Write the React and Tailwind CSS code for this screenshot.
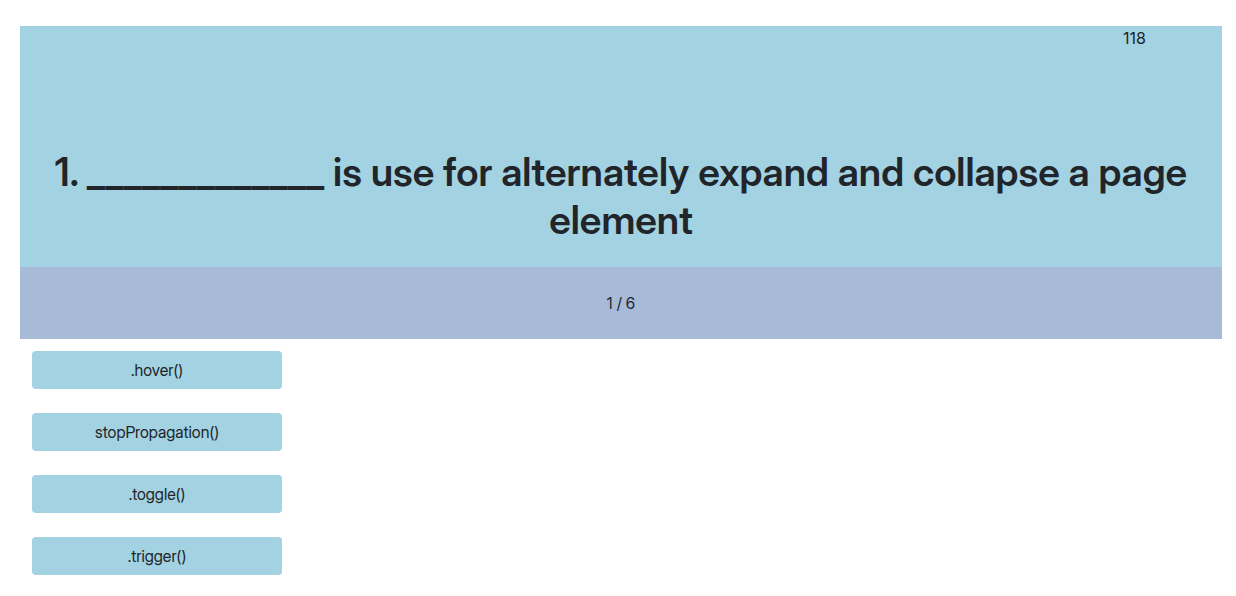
const options = ['.hover()', 'stopPropagation()', '.toggle()', '.trigger()'];

export default function App() {
  return (
    <main className="pt-[26px] pr-[14px] pb-5 pl-5 font-['Inter','Liberation_Sans',sans-serif] text-base text-[#212529]">
      <section className="flex flex-col bg-[#a3d2e2]">
        <div className="flex h-[122px] justify-end pr-19">
          <span>118</span>
        </div>
        <h1 className="px-6 pb-[23px] text-center font-['Inter_Display','Inter',sans-serif] text-[39px] leading-12 font-semibold">
          1. _____________ is use for alternately expand and collapse a page element
        </h1>
        <p className="bg-[#a7bbd9] py-6 text-center font-['Inter_Display','Inter',sans-serif]">1 / 6</p>
      </section>
      <div className="flex flex-col items-start gap-6 p-3">
        {options.map((option) => (
          <button key={option} type="button" className="h-[38px] w-[250px] rounded bg-[#a3d2e2] text-center font-['Inter_Display','Inter',sans-serif]">
            {option}
          </button>
        ))}
      </div>
    </main>
  );
}
